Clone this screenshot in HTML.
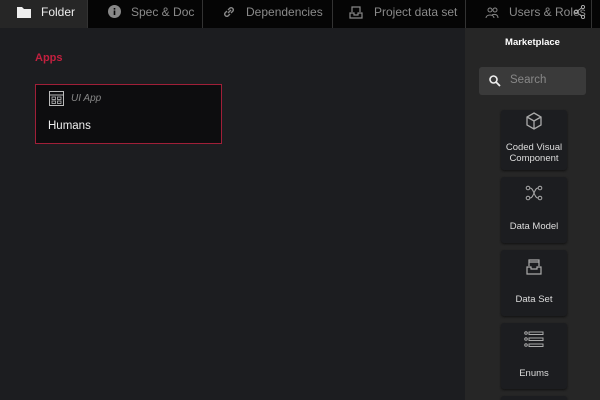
<!DOCTYPE html>
<html><head><style>
*{margin:0;padding:0;box-sizing:border-box}
html,body{width:600px;height:400px;overflow:hidden}
body{background:#1c1d20;font-family:"Liberation Sans",sans-serif;position:relative}
.top{position:absolute;left:0;top:0;width:600px;height:28px;background:#050505}
.tab{position:absolute;top:0;height:28px;color:#8a8a8a;font-size:12px;line-height:24px;border-right:1px solid #333}
.tab svg{position:absolute;top:5px}
.side{position:absolute;left:465px;top:28px;width:135px;height:372px;background:#262626;overflow:hidden}
.card{position:absolute;left:36px;width:66px;background:#1c1d20;border-radius:3px;color:#ddd;font-size:9.5px;text-align:center;line-height:11px;box-shadow:0 1px 2px #111}
.card svg{position:absolute;left:24px;top:2px}
</style></head><body>
<div class="top">
<div class="tab" style="left:0;width:88px;background:#262626;color:#eee"><svg width="14" height="12" style="left:17px;top:6px"><path d="M0 1h5l2 2h7v9H0z" fill="#eee"/></svg><span style="position:absolute;left:41px">Folder</span></div>
<div class="tab" style="left:88px;width:115px"><svg width="13" height="13" style="left:20px"><circle cx="6.5" cy="6.5" r="6.5" fill="#888"/><rect x="5.7" y="5.5" width="1.6" height="4.5" fill="#050505"/><rect x="5.7" y="3" width="1.6" height="1.6" fill="#050505"/></svg><span style="position:absolute;left:43px">Spec &amp; Doc</span></div>
<div class="tab" style="left:203px;width:130px"><svg width="14" height="14" style="left:19px"><path d="M6 8l3-3M5 6L3 8a2.2 2.2 0 003 3l2-2M9 8l2-2a2.2 2.2 0 00-3-3L6 5" stroke="#888" stroke-width="1.4" fill="none"/></svg><span style="position:absolute;left:43px">Dependencies</span></div>
<div class="tab" style="left:333px;width:133px"><svg width="14" height="14" style="left:16px"><path d="M1 8v5h12V8H9v2H5V8zM3 7V2h8v5" stroke="#888" stroke-width="1.2" fill="none"/></svg><span style="position:absolute;left:41px">Project data set</span></div>
<div class="tab" style="left:466px;width:126px"><svg width="14" height="12" style="left:19px;top:7px"><circle cx="5" cy="3" r="2" stroke="#888" fill="none"/><circle cx="10" cy="3" r="2" stroke="#888" fill="none"/><path d="M1 11c0-4 8-4 8 0M7 8c2-1 6-1 6 3" stroke="#888" fill="none"/></svg><span style="position:absolute;left:43px">Users &amp; Roles</span><svg width="12" height="14" style="left:108px;top:5px"><circle cx="2" cy="7" r="1.6" stroke="#aaa" fill="none"/><circle cx="9" cy="2" r="1.6" stroke="#aaa" fill="none"/><circle cx="9" cy="12" r="1.6" stroke="#aaa" fill="none"/><path d="M3.5 6l4-3M3.5 8l4 3" stroke="#aaa"/></svg></div>
</div>
<div style="position:absolute;left:35px;top:52px;color:#c2203f;font-size:11px;font-weight:bold">Apps</div>
<div style="position:absolute;left:35px;top:84px;width:187px;height:60px;background:#0d0d0f;border:1px solid #a01f38">
<svg width="15" height="15" style="position:absolute;left:13px;top:6px"><rect x="0.5" y="0.5" width="14" height="14" stroke="#bbb" fill="none"/><path d="M1 4h13" stroke="#bbb"/><rect x="3" y="6" width="3.5" height="2.5" stroke="#bbb" fill="none" stroke-width=".8"/><rect x="8.5" y="6" width="3.5" height="2.5" stroke="#bbb" fill="none" stroke-width=".8"/><rect x="3" y="10" width="3.5" height="2.5" stroke="#bbb" fill="none" stroke-width=".8"/><rect x="8.5" y="10" width="3.5" height="2.5" stroke="#bbb" fill="none" stroke-width=".8"/></svg>
<div style="position:absolute;left:35px;top:8px;color:#888;font-size:10px;font-style:italic">UI App</div>
<div style="position:absolute;left:12px;top:35px;color:#eee;font-size:11.5px">Humans</div>
</div>
<div class="side">
<div style="position:absolute;left:0;top:0;width:135px;height:32px;text-align:center;color:#fff;font-size:9.5px;font-weight:bold;line-height:30px">Marketplace</div>
<div style="position:absolute;left:14px;top:39px;width:107px;height:28px;background:#3a3a3a;border-radius:3px">
<svg width="12" height="12" style="position:absolute;left:10px;top:8px"><circle cx="4.5" cy="4.5" r="3.5" stroke="#eee" stroke-width="1.6" fill="none"/><path d="M7 7l4 4" stroke="#eee" stroke-width="1.8"/></svg>
<span style="position:absolute;left:31px;top:7px;color:#888;font-size:11.5px">Search</span></div>
<div class="card" style="top:82px;height:60px"><svg width="18" height="18"><path d="M9 1l7 4v8l-7 4-7-4V5zM2 5l7 4 7-4M9 9v8" stroke="#aaa" stroke-width="1.3" fill="none"/></svg><div style="padding-top:32px">Coded Visual<br>Component</div></div>
<div class="card" style="top:149px;height:66px"><svg width="18" height="18" style="top:8px"><circle cx="3" cy="3" r="1.8" stroke="#aaa" fill="none"/><circle cx="15" cy="3" r="1.8" stroke="#aaa" fill="none"/><circle cx="3" cy="13" r="1.8" stroke="#aaa" fill="none"/><circle cx="15" cy="13" r="1.8" stroke="#aaa" fill="none"/><path d="M5 3c4 0 4 10 8 10M5 13c4 0 4-10 8-10" stroke="#aaa" fill="none"/></svg><div style="padding-top:44px">Data Model</div></div>
<div class="card" style="top:222px;height:66px"><svg width="18" height="18" style="top:8px"><path d="M2 9v7h14V9h-4v2H6V9zM4 8V2h10v6M4 4h10" stroke="#aaa" stroke-width="1.2" fill="none"/></svg><div style="padding-top:44px">Data Set</div></div>
<div class="card" style="top:295px;height:66px"><svg width="20" height="18" style="left:23px;top:8px"><g stroke="#aaa" fill="none"><circle cx="2" cy="2" r="1.3"/><circle cx="2" cy="8" r="1.3"/><circle cx="2" cy="14" r="1.3"/><rect x="5" y="1" width="14" height="2.5"/><rect x="5" y="7" width="14" height="2.5"/><rect x="5" y="13" width="14" height="2.5"/></g></svg><div style="padding-top:45px">Enums</div></div>
<div class="card" style="top:368px;height:20px"></div>
</div>
</body></html>
